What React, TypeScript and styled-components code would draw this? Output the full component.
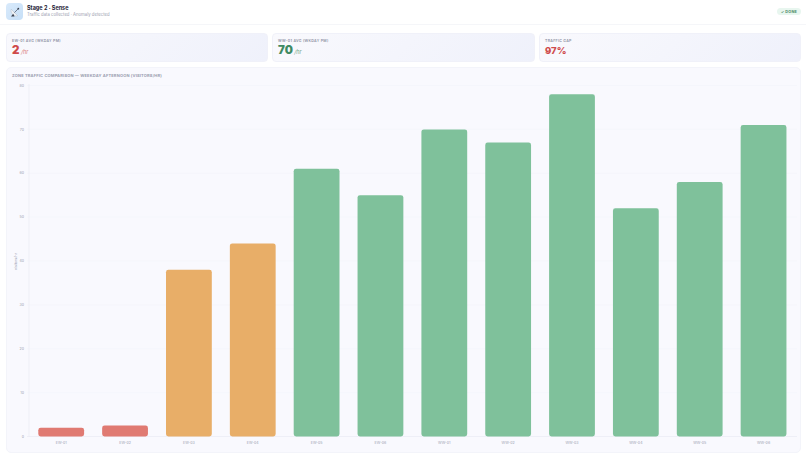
import styled, { createGlobalStyle } from 'styled-components';

const zones = [
  { name: 'EW-01', value: 2, color: '#e07a72' },
  { name: 'EW-02', value: 2.5, color: '#e07a72' },
  { name: 'EW-03', value: 38, color: '#e8ae68' },
  { name: 'EW-04', value: 44, color: '#e8ae68' },
  { name: 'EW-05', value: 61, color: '#7fc19b' },
  { name: 'EW-06', value: 55, color: '#7fc19b' },
  { name: 'WW-01', value: 70, color: '#7fc19b' },
  { name: 'WW-02', value: 67, color: '#7fc19b' },
  { name: 'WW-03', value: 78, color: '#7fc19b' },
  { name: 'WW-04', value: 52, color: '#7fc19b' },
  { name: 'WW-05', value: 58, color: '#7fc19b' },
  { name: 'WW-06', value: 71, color: '#7fc19b' },
];

const ticks = [0, 10, 20, 30, 40, 50, 60, 70, 80];

const GlobalStyle = createGlobalStyle`
  html, body {
    margin: 0;
    background: #ffffff;
    font-family: Inter, "Liberation Sans", sans-serif;
  }
`;

const Page = styled.div`
  width: 806px;
  height: 458px;
  overflow: hidden;
  display: flex;
  flex-direction: column;
`;

const Header = styled.header`
  height: 25px;
  padding: 0 5px 1px 6px;
  box-sizing: border-box;
  display: flex;
  align-items: center;
  gap: 4px;
  border-bottom: 1px solid #f5f6f9;
`;

const IconBox = styled.div`
  width: 17px;
  height: 17px;
  border-radius: 4px;
  background: linear-gradient(135deg, #d9eafb, #c6dff7);
  display: flex;
  align-items: center;
  justify-content: center;
`;

const HeaderText = styled.div`
  flex: 1;
`;

const Title = styled.div`
  font-size: 5.5px;
  line-height: 7px;
  font-weight: 700;
  color: #1e2235;
`;

const Subtitle = styled.div`
  font-size: 4.25px;
  line-height: 6px;
  color: #9ca1b0;
`;

const DoneBadge = styled.div`
  height: 7px;
  padding: 0 4px;
  border-radius: 4px;
  background: #e8f6ef;
  color: #4b8a68;
  font-size: 3.8px;
  line-height: 7px;
  font-weight: 700;
  letter-spacing: 0.2px;
`;

const Body = styled.main`
  flex: 1;
  padding: 8px 5px 5px 6px;
  display: flex;
  flex-direction: column;
  gap: 5px;
  min-height: 0;
`;

const Stats = styled.section`
  display: flex;
  gap: 4px;
  height: 29px;
`;

const StatCard = styled.div<{ $width: number }>`
  width: ${(p) => p.$width}px;
  box-sizing: border-box;
  padding: 5px 5px 0;
  border-radius: 4px;
  border: 1px solid #f0f1f9;
  background: linear-gradient(135deg, #f9f9fd, #eff1fb);
`;

const StatLabel = styled.div`
  font-size: 3.6px;
  line-height: 5px;
  font-weight: 600;
  letter-spacing: 0.28px;
  color: #8e92a4;
  white-space: nowrap;
`;

const StatValue = styled.div<{ $color: string; $size?: number }>`
  margin-top: 1px;
  font-size: ${(p) => p.$size ?? 11.5}px;
  line-height: 11px;
  font-weight: ${(p) => (p.$size ? 800 : 900)};
  color: ${(p) => p.$color};
  display: flex;
  align-items: baseline;
  gap: 1.5px;
`;

const StatUnit = styled.span`
  font-size: 5.5px;
  font-weight: 400;
  font-style: italic;
  opacity: 0.75;
`;

const ChartCard = styled.section`
  flex: 1;
  min-height: 0;
  padding: 5px 4px 0 5px;
  border-radius: 5px;
  border: 1px solid #f3f4fa;
  background: #f9f9fe;
  box-sizing: border-box;
  display: flex;
  flex-direction: column;
`;

const ChartTitle = styled.div`
  font-size: 4px;
  line-height: 5px;
  font-weight: 700;
  letter-spacing: 0.18px;
  color: #9a9eb0;
  white-space: nowrap;
`;

const ChartSvg = styled.svg`
  display: block;
  font-family: Inter, "Liberation Sans", sans-serif;
`;

const TrafficChart = () => {
  // chart coordinates are local to the card content box
  const x0 = 17;
  const base = 358.5;
  const perUnit = 351 / 80;
  const step = 63.85;
  return (
    <ChartSvg width={785} height={372} viewBox="0 0 785 372">
      {ticks.map((t) => {
        const y = base - t * perUnit;
        return (
          <g key={t}>
            <line x1={x0 - 2} x2={785} y1={y} y2={y} stroke={t === 0 ? '#e9ebf3' : '#f4f5fb'} strokeWidth={0.7} />
            <text x={x0 - 5} y={y + 1.2} fontSize={3.6} fill="#9a9eb0" textAnchor="end">{t}</text>
          </g>
        );
      })}
      <line x1={x0} x2={x0} y1={6} y2={base} stroke="#e9ebf3" strokeWidth={0.7} />
      <text
        transform={`translate(4.8 ${base - 175}) rotate(-90)`}
        fontSize={3.6}
        fill="#9a9eb0"
        textAnchor="middle"
      >
        visitors/hr
      </text>
      {zones.map((z, i) => {
        const h = z.value * perUnit;
        const x = x0 + 9.3 + i * step;
        return (
          <g key={z.name}>
            <rect x={x} y={base - h} width={45.8} height={h} rx={2.4} fill={z.color} />
            <text x={x + 22.9} y={base + 7.5} fontSize={3.6} fill="#9a9eb0" textAnchor="middle">{z.name}</text>
          </g>
        );
      })}
    </ChartSvg>
  );
};

const SatelliteDish = () => (
  <svg width="12" height="12" viewBox="0 0 12 12">
    <path d="M2.2 3.2a5.4 5.4 0 0 0 6.6 6.6z" fill="#eef1f5" stroke="#a9b2bf" strokeWidth="0.4" />
    <path d="M5.4 6.6L9 3" stroke="#4a5260" strokeWidth="0.7" />
    <circle cx="9.3" cy="2.7" r="0.9" fill="#39404f" />
    <path d="M4.2 7.8L2 10.6h3.6z" fill="#3c4350" />
  </svg>
);

const App = () => {
  return (
    <Page>
      <GlobalStyle />
      <Header>
        <IconBox>
          <SatelliteDish />
        </IconBox>
        <HeaderText>
          <Title>Stage 2 · Sense</Title>
          <Subtitle>Traffic data collected · Anomaly detected</Subtitle>
        </HeaderText>
        <DoneBadge>✓ DONE</DoneBadge>
      </Header>
      <Body>
        <Stats>
          <StatCard $width={262}>
            <StatLabel>EW-01 AVG (WKDAY PM)</StatLabel>
            <StatValue $color="#cf4a4a">2<StatUnit>/hr</StatUnit></StatValue>
          </StatCard>
          <StatCard $width={263}>
            <StatLabel>WW-01 AVG (WKDAY PM)</StatLabel>
            <StatValue $color="#3f8a63">70<StatUnit>/hr</StatUnit></StatValue>
          </StatCard>
          <StatCard $width={262}>
            <StatLabel>TRAFFIC GAP</StatLabel>
            <StatValue $color="#cf4a4a" $size={9.5}>97%</StatValue>
          </StatCard>
        </Stats>
        <ChartCard>
          <ChartTitle>ZONE TRAFFIC COMPARISON — WEEKDAY AFTERNOON (VISITORS/HR)</ChartTitle>
          <TrafficChart />
        </ChartCard>
      </Body>
    </Page>
  );
};

export default App;
